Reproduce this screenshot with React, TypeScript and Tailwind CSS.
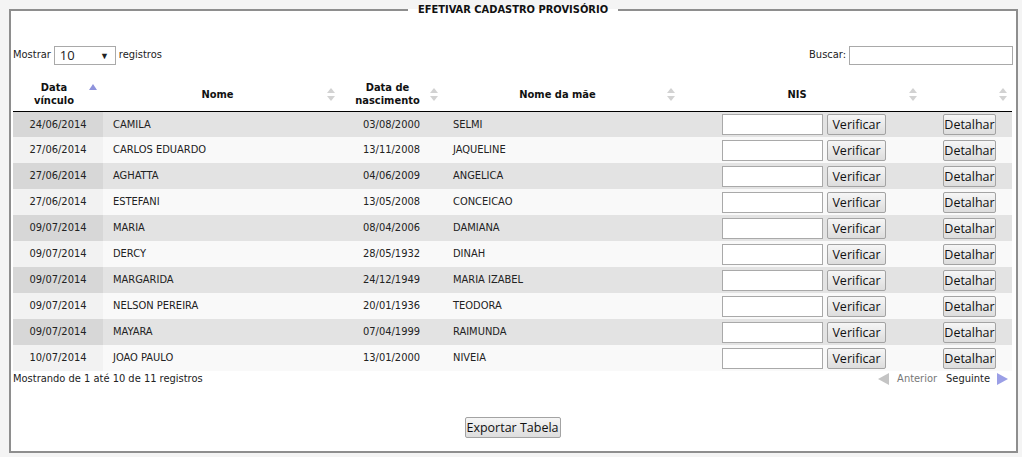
import React from "react";

type Row = {
  vinculo: string;
  nome: string;
  nascimento: string;
  mae: string;
};

const rows: Row[] = [
  { vinculo: "24/06/2014", nome: "CAMILA", nascimento: "03/08/2000", mae: "SELMI" },
  { vinculo: "27/06/2014", nome: "CARLOS EDUARDO", nascimento: "13/11/2008", mae: "JAQUELINE" },
  { vinculo: "27/06/2014", nome: "AGHATTA", nascimento: "04/06/2009", mae: "ANGELICA" },
  { vinculo: "27/06/2014", nome: "ESTEFANI", nascimento: "13/05/2008", mae: "CONCEICAO" },
  { vinculo: "09/07/2014", nome: "MARIA", nascimento: "08/04/2006", mae: "DAMIANA" },
  { vinculo: "09/07/2014", nome: "DERCY", nascimento: "28/05/1932", mae: "DINAH" },
  { vinculo: "09/07/2014", nome: "MARGARIDA", nascimento: "24/12/1949", mae: "MARIA IZABEL" },
  { vinculo: "09/07/2014", nome: "NELSON PEREIRA", nascimento: "20/01/1936", mae: "TEODORA" },
  { vinculo: "09/07/2014", nome: "MAYARA", nascimento: "07/04/1999", mae: "RAIMUNDA" },
  { vinculo: "10/07/2014", nome: "JOAO PAULO", nascimento: "13/01/2000", mae: "NIVEIA" },
];

const btn =
  "h-[21px] px-0 border border-[#a3a3a3] rounded-[2px] bg-gradient-to-b from-[#f6f6f6] to-[#dddddd] text-[12.5px] leading-[17px] text-[#111] font-['Open_Sans',sans-serif]";

function SortBoth() {
  return (
    <svg width="8" height="13" viewBox="0 0 8 13" className="absolute right-[5px] top-[10px]">
      <polygon points="4,0 8,5 0,5" fill="#d2d2d2" />
      <polygon points="0,8 8,8 4,13" fill="#d2d2d2" />
    </svg>
  );
}

function SortAsc() {
  return (
    <svg width="8" height="6" viewBox="0 0 8 6" className="absolute right-[6px] top-[6px]">
      <polygon points="4,0 8,6 0,6" fill="#8f93dc" />
    </svg>
  );
}

function Th({
  children,
  asc,
}: {
  children: React.ReactNode;
  asc?: boolean;
}) {
  return (
    <th className="relative h-[33px] pl-[10px] pr-[18px] py-[3px] text-center font-bold leading-[13px] border-b border-black align-middle">
      {children}
      {asc ? <SortAsc /> : <SortBoth />}
    </th>
  );
}

export default function App() {
  return (
    <div className="min-h-screen bg-[#f4f4f4] pt-[3px] pl-[9px] pr-[4px] font-['DejaVu_Sans_Condensed','Liberation_Sans',sans-serif] text-[11px] text-[#222]">
      <fieldset className="w-[1009px] h-[450px] border-2 border-[#8e8e8e] bg-white pl-[2px] pr-[3px]">
        <legend className="mx-auto px-[10px] font-bold leading-[13px] text-[#111]">
          EFETIVAR CADASTRO PROVISÓRIO
        </legend>

        <div className="mt-[30px] flex h-[19px] items-center justify-between">
          <div className="flex items-center">
            <span>Mostrar</span>
            <div className="ml-[3px] flex h-[19px] w-[62px] items-center justify-between border border-[#a9a9a9] bg-white pl-[5px] pr-[6px] text-[13px] font-['Open_Sans',sans-serif]">
              <span className="leading-[17px]">10</span>
              <span className="text-[9px]">▼</span>
            </div>
            <span className="ml-[3px]">registros</span>
          </div>
          <div className="flex items-center">
            <span>Buscar:</span>
            <input className="ml-[3px] h-[19px] w-[164px] border border-[#a9a9a9] bg-white" />
          </div>
        </div>

        <table className="mt-[13px] w-[999px] table-fixed">
          <colgroup>
            <col className="w-[90px]" />
            <col className="w-[237px]" />
            <col className="w-[103px]" />
            <col className="w-[237px]" />
            <col className="w-[242px]" />
            <col className="w-[90px]" />
          </colgroup>
          <thead>
            <tr className="text-[#111]">
              <Th asc>
                Data
                <br />
                vínculo
              </Th>
              <Th>Nome</Th>
              <Th>
                Data de
                <br />
                nascimento
              </Th>
              <Th>Nome da mãe</Th>
              <Th>NIS</Th>
              <Th>{""}</Th>
            </tr>
          </thead>
          <tbody>
            {rows.map((r, i) => {
              const odd = i % 2 === 0;
              return (
                <tr key={i} className={`h-[26px] ${odd ? "bg-[#e3e3e3]" : "bg-[#f9f9f9]"}`}>
                  <td className={`px-[10px] pt-[1px] text-center ${odd ? "bg-[#d7d7d7]" : "bg-[#f2f2f2]"}`}>
                    {r.vinculo}
                  </td>
                  <td className="px-[10px] pt-[1px]">{r.nome}</td>
                  <td className="px-[10px] pt-[1px] text-center">{r.nascimento}</td>
                  <td className="px-[10px] pt-[1px]">{r.mae}</td>
                  <td className="py-[2px] text-center">
                    <div className="flex items-center justify-center gap-[4px] pl-[6px]">
                      <input className="h-[21px] w-[101px] border border-[#a9a9a9] bg-white" />
                      <button className={btn + " w-[59px]"}>Verificar</button>
                    </div>
                  </td>
                  <td className="py-[2px] pl-[5px] text-center">
                    <button className={btn + " w-[53px]"}>Detalhar</button>
                  </td>
                </tr>
              );
            })}
          </tbody>
        </table>

        <div className="flex h-[16px] w-[999px] items-center justify-between">
          <span>Mostrando de 1 até 10 de 11 registros</span>
          <div className="flex items-center pr-[4px]">
            <svg width="11" height="12" viewBox="0 0 11 12">
              <polygon points="11,0 11,12 0,6" fill="#c4c4c4" />
            </svg>
            <span className="ml-[8px] text-[#777]">Anterior</span>
            <span className="ml-[9px] text-[#222]">Seguinte</span>
            <svg width="11" height="12" viewBox="0 0 11 12" className="ml-[7px]">
              <polygon points="0,0 11,6 0,12" fill="#9b9fe6" />
            </svg>
          </div>
        </div>

        <div className="mt-[30px] flex w-[999px] justify-center">
          <button className={btn + " h-[21px] w-[96px]"}>Exportar Tabela</button>
        </div>
      </fieldset>
    </div>
  );
}
